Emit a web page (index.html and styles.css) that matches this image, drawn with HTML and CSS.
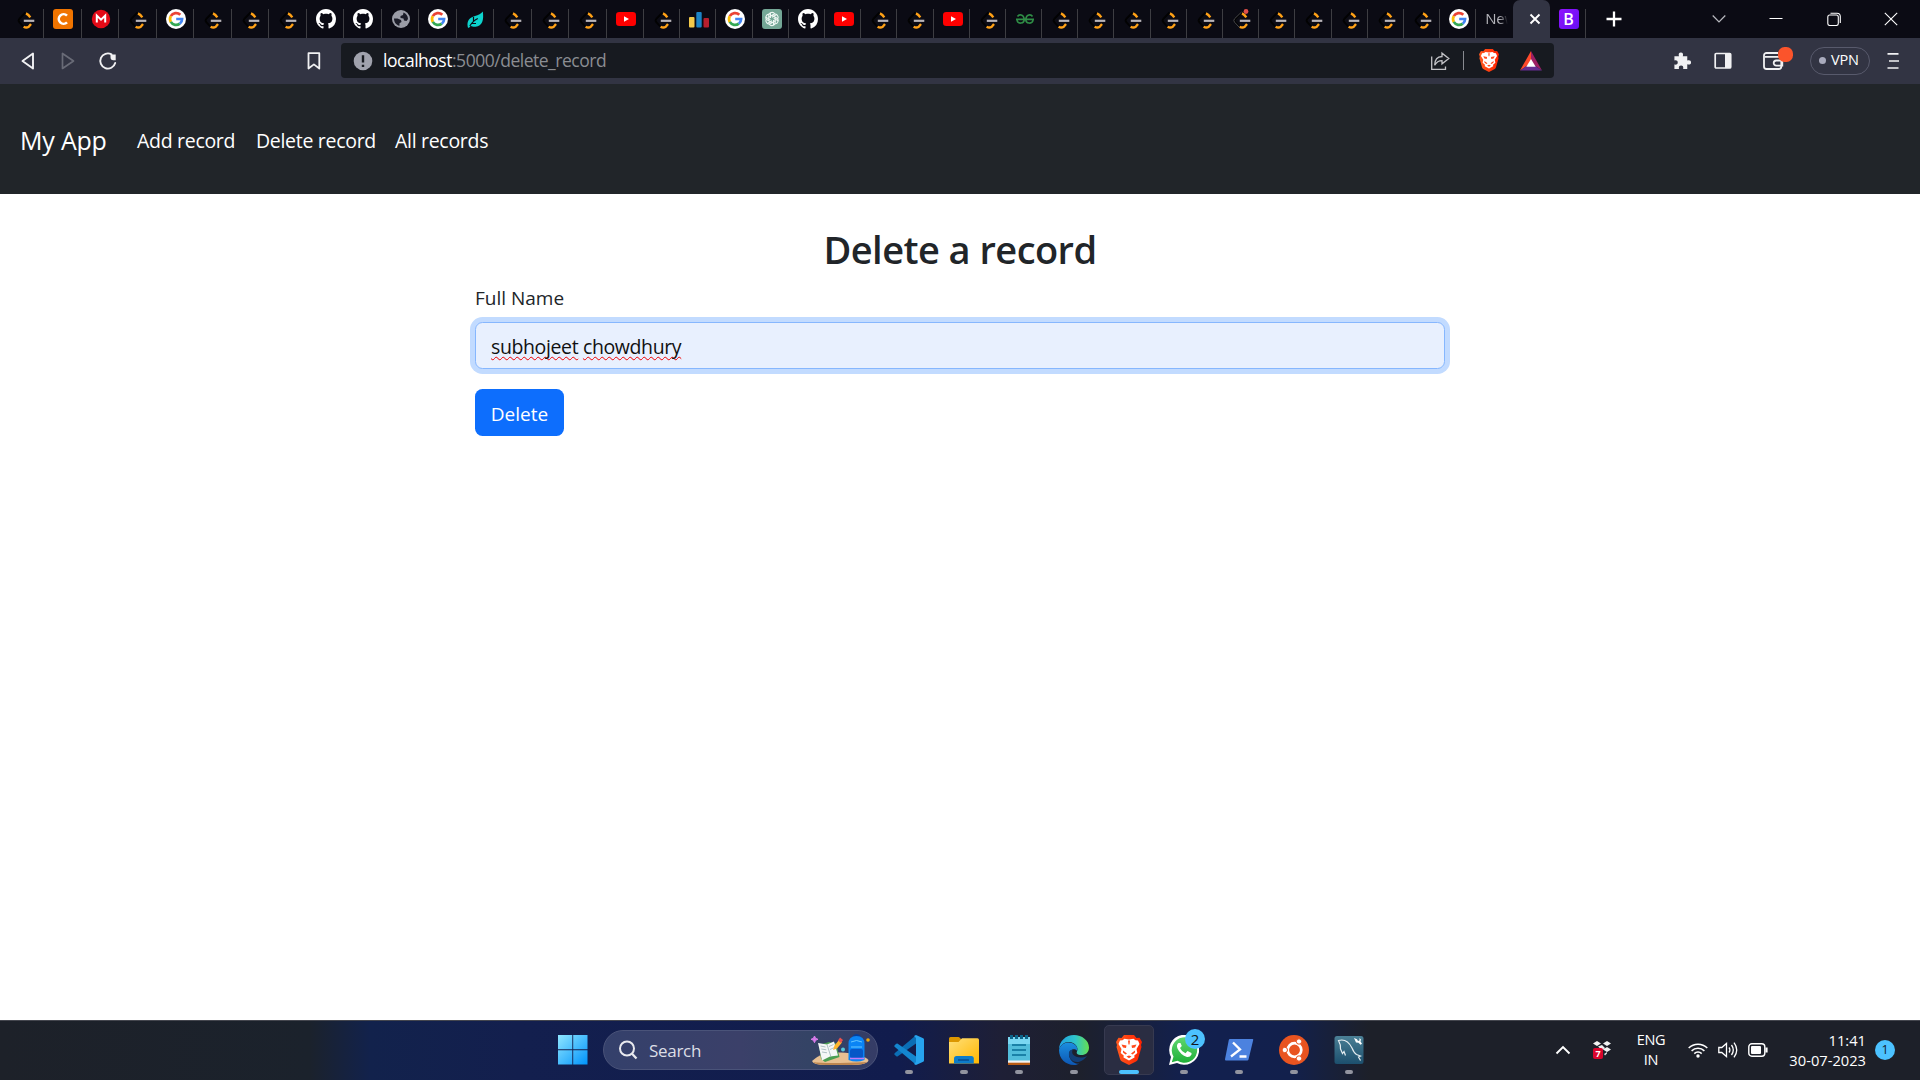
FILE: index.html
```html
<!DOCTYPE html>
<html lang="en">
<head>
<meta charset="utf-8">
<title>Delete a record</title>
<link rel="stylesheet" href="styles.css">
</head>
<body>
<svg class="sprite" aria-hidden="true">
  <defs>
    <linearGradient id="win-g" x1="0" y1="0" x2="1" y2="1"><stop offset="0" stop-color="#8fe6ff"/><stop offset="1" stop-color="#0093fb"/></linearGradient>
    <linearGradient id="edge-a" x1="0" y1="0" x2="1" y2="0"><stop offset="0" stop-color="#1fa0e4"/><stop offset=".55" stop-color="#2fc5c9"/><stop offset="1" stop-color="#66e04f"/></linearGradient>
    <linearGradient id="edge-b" x1="0" y1="0" x2="0" y2="1"><stop offset="0" stop-color="#1b8fe0"/><stop offset="1" stop-color="#0d57b4"/></linearGradient>
    <linearGradient id="brave-g" x1="0" y1="0" x2="1" y2="0"><stop offset="0" stop-color="#ff5a1f"/><stop offset="1" stop-color="#ff2200"/></linearGradient>
    <linearGradient id="fold-g" x1="0" y1="0" x2="1" y2="1"><stop offset="0" stop-color="#ffe07a"/><stop offset="1" stop-color="#ffb700"/></linearGradient>
    <linearGradient id="wa-g" x1="0" y1="0" x2="0" y2="1"><stop offset="0" stop-color="#5fd670"/><stop offset="1" stop-color="#20b038"/></linearGradient>
    <linearGradient id="sql-g" x1="0" y1="0" x2="0" y2="1"><stop offset="0" stop-color="#4b8096"/><stop offset="1" stop-color="#1c4f6d"/></linearGradient>
  </defs>
  <symbol id="leet" viewBox="0 0 20 20">
    <path d="M9.500 3.500 3.300 9.800q-1.400 1.700 0 3.400l4 4.300" fill="none" stroke="#020202" stroke-width="1.800"/>
    <path d="M10 4.400q2.600 1.200 4.300 4M7.600 17.700q2.800 1.600 5.200 0l2.200-2.700" fill="none" stroke="#ffa116" stroke-width="2.400"/>
    <path d="M7.800 11.800h10.500" stroke="#b9b5b9" stroke-width="2.200"/>
  </symbol>
  <symbol id="google" viewBox="0 0 20 20">
    <circle cx="10" cy="10" r="10" fill="#fff"/>
    <g fill="none" stroke-width="2.700">
      <path d="M4.800 7.200A6 6 0 0 1 14.300 5.800" stroke="#ea4335"/>
      <path d="M4.800 7.200a6 6 0 0 0 0 5.800" stroke="#fbbc05"/>
      <path d="M4.800 12.900a6 6 0 0 0 9 1.700" stroke="#34a853"/>
      <path d="M10.200 10h5.900a6 6 0 0 1-2.300 4.700" stroke="#4285f4"/>
    </g>
  </symbol>
  <symbol id="github" viewBox="0 0 16 16">
    <path fill="#fff" d="M8 0C3.580 0 0 3.580 0 8c0 3.540 2.290 6.530 5.470 7.590.4.070.55-.17.55-.38 0-.19-.01-.82-.01-1.490-2.010.37-2.530-.49-2.690-.94-.09-.23-.48-.94-.82-1.130-.28-.15-.68-.52-.01-.53.63-.01 1.080.58 1.230.82.72 1.210 1.870.87 2.330.66.07-.52.28-.87.51-1.070-1.780-.2-3.640-.89-3.640-3.950 0-.87.31-1.590.82-2.150-.08-.2-.36-1.020.08-2.120 0 0 .67-.21 2.200.82.64-.18 1.320-.27 2-.27s1.360.09 2 .27c1.530-1.040 2.200-.82 2.200-.82.44 1.100.16 1.920.08 2.120.51.56.82 1.270.82 2.150 0 3.070-1.870 3.750-3.650 3.950.29.25.54.73.54 1.480 0 1.070-.01 1.930-.01 2.200 0 .21.15.46.55.38A8.010 8.010 0 0 0 16 8c0-4.420-3.580-8-8-8z"/>
  </symbol>
  <symbol id="youtube" viewBox="0 0 20 20"><rect y="3" width="20" height="14" rx="3.300" fill="#f00"/><path d="M8 7.200v5.600l5-2.800z" fill="#fff"/></symbol>
  <symbol id="globe" viewBox="0 0 20 20"><circle cx="10" cy="10" r="9" fill="#9a9ca6"/><path d="M3 9.500h3.500L10 11l.5 2-2 1.200v2.600C5 16 3 13 3 9.500zM12.500 3.500C15 4.500 17 7 17 10l-1.500 2-2.500-.5-.5-2-3-.5V7l2.500-1z" fill="#1b1c28"/></symbol>
  <symbol id="leaf" viewBox="0 0 20 20"><path d="M16.800 2.500C18 11 16.500 17 9.500 17.800c-2 .2-3.600-.3-4.700-1L2.800 19l-1-.8C.5 12 3.500 8.500 9 7c3.500-1 6-2.300 7.800-4.500z" fill="#0dd3cd"/><path d="M3.800 17c2.500-4 4.500-6 8-7.500M7.500 8v4.500M6 14.500h4" fill="none" stroke="#0b0b14" stroke-width="1.200"/></symbol>
  <symbol id="bars" viewBox="0 0 20 20"><rect y="8" width="5.500" height="10.500" rx="1" fill="#f3c94a"/><rect x="7.300" y="3" width="5.400" height="15.500" rx="1" fill="#1c84c6"/><rect x="14.500" y="9" width="5.500" height="9.500" rx="1" fill="#b71f2d"/></symbol>
  <symbol id="gpt" viewBox="0 0 20 20"><rect width="20" height="20" rx="3" fill="#74a796"/><g fill="none" stroke="#eef6f3" stroke-width="1.100"><g id="petal"><path d="M6.800 12V6.500a3.200 3.200 0 0 1 6-1.400M10 8.200l4.600-2.600"/></g><use href="#petal" transform="rotate(60 10 10)"/><use href="#petal" transform="rotate(120 10 10)"/><use href="#petal" transform="rotate(180 10 10)"/><use href="#petal" transform="rotate(240 10 10)"/><use href="#petal" transform="rotate(300 10 10)"/></g></symbol>
  <symbol id="gfg" viewBox="0 0 20 20"><g fill="none" stroke="#2f8d46" stroke-width="1.600"><path d="M2.500 7.500c1.500-2.500 6-2.500 6.700 2.500.3 5-6.700 5.500-7.200 1M17.500 7.500c-1.500-2.500-6-2.500-6.700 2.500-.3 5 6.700 5.500 7.200 1M1 10.400h18"/></g></symbol>
  <symbol id="mega" viewBox="0 0 20 20"><circle cx="10" cy="10" r="9.200" fill="#e30a17"/><path d="M5.800 13.500v-7L10 10.600l4.200-4.100v7" fill="none" stroke="#fff" stroke-width="2"/></symbol>
  <symbol id="coursera" viewBox="0 0 20 20"><rect width="20" height="20" rx="3" fill="#f07400"/><path d="M14 6.600a4.800 4.800 0 1 0 0 6.800" fill="none" stroke="#fff" stroke-width="2.600"/></symbol>
  <symbol id="lion" viewBox="0 0 26 30">
    <path d="M8 0h10l2.500 3 3-.3L26 7l-1 3 .5 2-3.500 12q-.5 1.500-2 2.500L13 30l-7-3.500q-1.500-1-2-2.500L.5 12 1 10 0 7l2.500-4.300 3 .3z" fill="url(#brave-g)"/>
    <path d="M8.500 3.800 13 4.500l4.500-.7 2 1.500 2.500.2L23.500 9l-3 5 .8 4-3 2.500.2 2L13 25.500l-5.500-3 .2-2-3-2.500.8-4L2.500 9 4 5.500l2.500-.2z" fill="#fff"/>
    <path d="M5.500 9.500l5 1-.5 2.500-3-.5zM20.500 9.500l-5 1 .5 2.500 3-.5zM7 15.500l4 3-1.500 1L7 17.500zM19 15.500l-4 3 1.500 1L19 17.500zM10.500 21.500l2.500-1 2.500 1-2.500 1.700zM12 5.500h2l-.5 4h-1z" fill="#ff4a1c"/>
  </symbol>
</svg>

<header class="browser">
  <div class="tabstrip">
    <div class="tab first"><svg><use href="#leet"/></svg></div>
    <div class="tab"><svg><use href="#coursera"/></svg></div>
    <div class="tab"><svg><use href="#mega"/></svg></div>
    <div class="tab"><svg><use href="#leet"/></svg></div>
    <div class="tab"><svg><use href="#google"/></svg></div>
    <div class="tab"><svg><use href="#leet"/></svg></div>
    <div class="tab"><svg><use href="#leet"/></svg></div>
    <div class="tab"><svg><use href="#leet"/></svg></div>
    <div class="tab"><svg><use href="#github"/></svg></div>
    <div class="tab"><svg><use href="#github"/></svg></div>
    <div class="tab"><svg><use href="#globe"/></svg></div>
    <div class="tab"><svg><use href="#google"/></svg></div>
    <div class="tab"><svg><use href="#leaf"/></svg></div>
    <div class="tab"><svg><use href="#leet"/></svg></div>
    <div class="tab"><svg><use href="#leet"/></svg></div>
    <div class="tab"><svg><use href="#leet"/></svg></div>
    <div class="tab"><svg><use href="#youtube"/></svg></div>
    <div class="tab narrow"><svg><use href="#leet"/></svg></div>
    <div class="tab narrow"><svg><use href="#bars"/></svg></div>
    <div class="tab narrow"><svg><use href="#google"/></svg></div>
    <div class="tab narrow"><svg><use href="#gpt"/></svg></div>
    <div class="tab narrow"><svg><use href="#github"/></svg></div>
    <div class="tab narrow"><svg><use href="#youtube"/></svg></div>
    <div class="tab narrow"><svg><use href="#leet"/></svg></div>
    <div class="tab narrow"><svg><use href="#leet"/></svg></div>
    <div class="tab narrow"><svg><use href="#youtube"/></svg></div>
    <div class="tab narrow"><svg><use href="#leet"/></svg></div>
    <div class="tab narrow"><svg><use href="#gfg"/></svg></div>
    <div class="tab narrow"><svg><use href="#leet"/></svg></div>
    <div class="tab narrow"><svg><use href="#leet"/></svg></div>
    <div class="tab narrow"><svg><use href="#leet"/></svg></div>
    <div class="tab narrow"><svg><use href="#leet"/></svg></div>
    <div class="tab narrow"><svg><use href="#leet"/></svg></div>
    <div class="tab narrow"><svg viewBox="0 0 20 20"><use href="#leet"/><path d="M9.500 3 2.500 9.800q-1.400 1.700 0 3.400l5 5.300" fill="none" stroke="#4a4a4e"/><circle cx="14" cy="2.500" r="2.400" fill="#e0504c"/></svg></div>
    <div class="tab narrow"><svg><use href="#leet"/></svg></div>
    <div class="tab narrow"><svg><use href="#leet"/></svg></div>
    <div class="tab narrow"><svg><use href="#leet"/></svg></div>
    <div class="tab narrow"><svg><use href="#leet"/></svg></div>
    <div class="tab narrow"><svg><use href="#leet"/></svg></div>
    <div class="tab narrow"><svg><use href="#google"/></svg></div>
    <div class="tab narrow titled"><span class="tab-title">New</span></div>
    <div class="tab active"><svg viewBox="0 0 12 12"><path d="M1.500 1.500l9 9M10.500 1.500l-9 9" stroke="#fff" stroke-width="1.900"/></svg></div>
    <div class="tab boot"><span class="boot-icon">B</span></div>
    <svg class="new-tab" viewBox="0 0 16 16"><path d="M8 .5v15M.5 8h15" stroke="#fff" stroke-width="2.300"/></svg>
    <div class="window-controls">
      <svg viewBox="0 0 14 14"><path d="M.7 3.500 7 10l6.300-6.500" fill="none" stroke="#b9bac0" stroke-width="1.200"/></svg>
      <svg viewBox="0 0 14 14"><path d="M.5 6.500h13" stroke="#fff" stroke-width="1"/></svg>
      <svg viewBox="0 0 14 14"><g fill="none" stroke="#fff" stroke-width="1.100"><rect x=".8" y="3" width="10.500" height="10.500" rx="2"/><path d="M3.500 1.200h6.500q3.300 0 3.300 3.300v6.500"/></g></svg>
      <svg viewBox="0 0 14 14"><path d="M.8.8l12.400 12.400M13.200.8.8 13.200" stroke="#fff" stroke-width="1.100"/></svg>
    </div>
  </div>

  <div class="toolbar">
    <div class="nav-buttons">
      <svg viewBox="0 0 20 20"><path d="M15 2.500v15L4.500 10z" fill="none" stroke="#f1f1f3" stroke-width="1.900" stroke-linejoin="round"/></svg>
      <svg viewBox="0 0 20 20"><path d="M4.500 2.500v15L15.500 10z" fill="none" stroke="#696b77" stroke-width="1.700" stroke-linejoin="round"/></svg>
      <svg viewBox="0 0 20 20"><path d="M13.500 3.300A7.600 7.600 0 1 0 17.200 12" fill="none" stroke="#f1f1f3" stroke-width="1.900" stroke-linecap="round"/><path d="M12.500 3.500h5.200v5.700h-2.400a3 3 0 0 1-2.800-3z" fill="#f1f1f3"/></svg>
    </div>
    <svg class="bookmark" viewBox="0 0 20 20"><path d="M4.500 2.200h10.800V17.500L9.900 13.400 4.500 17.500z" fill="none" stroke="#f1f1f3" stroke-width="1.800" stroke-linejoin="round"/></svg>
    <div class="address">
      <svg class="info" viewBox="0 0 20 20"><circle cx="10" cy="10" r="9.300" fill="#a0a2ad"/><path d="M10 4.300v7.200M10 13.800v2.200" stroke="#171a20" stroke-width="2.400"/></svg>
      <span class="url"><b>localhost</b>:5000/delete_record</span>
      <svg class="share" viewBox="0 0 20 20"><g fill="none" stroke="#c2c2c6" stroke-width="1.300"><path d="M1.700 5.500v12.800h13.800V15.500"/><path d="M4.700 14.200C4.800 8.500 7.500 5.600 12 5.500V2.200l6.800 5.300-6.800 5.300V9.600C9 9.600 6.600 10.800 4.700 14.200z"/></g></svg>
      <i class="divider"></i>
      <svg class="shield"><use href="#lion"/></svg>
      <svg class="bat" viewBox="0 0 22 20"><path d="M11 0 0 19.500 11 12z" fill="#ff4a2b"/><path d="M11 0 22 19.500 11 12z" fill="#9e1f63"/><path d="M0 19.500h22L11 12z" fill="#662d91"/><path d="M11 8 6.300 15.700h9.400z" fill="#fff"/></svg>
    </div>
    <div class="actions">
      <svg class="puzzle" viewBox="0 0 20 20"><path d="M1.500 5h4.800C5.500 2.500 6.300 1 8.300 1s2.800 1.500 2 4H15v4.500c2.500-.8 4 0 4 2s-1.500 2.800-4 2V18.500h-4.300c.6-2.500-.5-3.700-2.200-3.700S5.700 16 6.300 18.500H1.500v-4.700c2.300.5 3.500-.5 3.500-2.200S3.800 8.900 1.500 9.400z" fill="#f1f1f3"/></svg>
      <svg class="panel" viewBox="0 0 18 18"><rect x="1.200" y="1.500" width="15.500" height="14.500" rx="1" fill="none" stroke="#f1f1f3" stroke-width="1.700"/><path d="M11 1.500h5.500v14.500H11z" fill="#f1f1f3"/></svg>
      <svg class="wallet" viewBox="0 0 32 26"><g fill="none" stroke="#f1f1f3" stroke-width="1.800"><path d="M16 7H4.500A2.500 2.500 0 0 0 2 9.500v11A2.500 2.500 0 0 0 4.500 23h12.300a2.500 2.500 0 0 0 2.500-2.500V12M3 10.800h14"/><path d="M20.300 14.500h-6a2.600 2.600 0 0 0 0 5.200h6z"/></g><rect x="16" y="1" width="15" height="15" rx="6.500" fill="#fb542b"/></svg>
      <span class="vpn"><i></i>VPN</span>
      <svg class="menu" viewBox="0 0 12 18"><path d="M.5 1.800h11M2 9h10M.5 16h11" stroke="#f1f1f3" stroke-width="1.700"/></svg>
    </div>
  </div>
</header>

<nav class="navbar">
  <a class="brand">My App</a>
  <a class="link add">Add record</a>
  <a class="link del">Delete record</a>
  <a class="link all">All records</a>
</nav>

<main class="page">
  <form class="record-form">
    <h1>Delete a record</h1>
    <label>Full Name</label>
    <div class="input"><span class="misspelt">subhojeet</span> <span class="misspelt">chowdhury</span></div>
    <button type="button">Delete</button>
  </form>
</main>

<footer class="taskbar">
  <svg class="start" viewBox="0 0 30 30"><path d="M0 0h14.300v14.300H0zM15.200 0H29.500v14.300H15.200zM0 15.200h14.300V29.500H0zM15.200 15.200h14.300v14.300H15.200z" fill="url(#win-g)"/></svg>
  <div class="search">
    <svg class="glass" viewBox="0 0 20 20"><circle cx="9" cy="8.500" r="7" fill="none" stroke="#e8e9ee" stroke-width="2"/><path d="M13.800 13.500 18.500 18.500" stroke="#e8e9ee" stroke-width="2.300"/></svg>
    <span>Search</span>
    <svg class="doodle" viewBox="0 0 60 32">
      <path d="M1 27C8 20 18 18 30 18.500S54 22 57.500 26Q57 31 40 31H15Q2 31 1 27z" fill="#e8c092"/><path d="M2 28q12 2 54 0-3 3-16 3H15Q5 31 2 28z" fill="#bd8650"/>
      <path d="M3.500 2 4.600 4.300l2.400 1-2.400 1L3.500 8.700 2.400 6.300 0 5.300l2.400-1z" fill="#d77be9" stroke="#d77be9"/>
      <path d="M8 11l10-3 7 1.500 3.500 13.500L14 28l-4-3z" fill="#4b9f52"/><path d="M7 9l9 1.500 7-3 4 14-8 1-8 4z" fill="#f5f7f7"/><path d="M16 10.500 20 23M9.500 12l5 1M10.300 15l5 .8M11 18l5 .8M18 12.500l4.500-2M19 15.500l4.500-2" stroke="#9db4b7" stroke-width=".8"/>
      <path d="M22 16l1.500-4.500L28 6l3 2.500-5 6z" fill="#ffb52e"/><path d="M27 6.500 29 3.500l3 2.500-2 3z" fill="#e8514e"/>
      <circle cx="32" cy="15.500" r="2" fill="#55c8dd"/><circle cx="57" cy="6" r="1.800" fill="#f2a90b"/>
      <path d="M42 3q3.500-4 7 0" fill="none" stroke="#063f9b" stroke-width="2"/><path d="M37.500 26V10q0-8 8-8t8 8v16q-8 3-16 0z" fill="#0a84f5"/><path d="M40 8q5.500-3 11 0M40 13h11" stroke="#67c7ff" fill="none"/><rect x="39" y="15" width="13" height="9" rx="2" fill="#0757c7"/><path d="M39 24.500h14" stroke="#c67bf6" stroke-width="1.500"/>
    </svg>
  </div>
  <div class="apps">
    <div class="app"><svg viewBox="0 0 30 30"><path d="M22 .3 22 8.500 3.800 21.300Q3 21.700 2.300 21.200L.6 19.700Q0 19 .6 18.300z" fill="#0b6eb5"/><path d="M22 29.700 22 21.500 3.800 8.700Q3 8.300 2.300 8.800L.6 10.300Q0 11 .6 11.700z" fill="#1486cf"/><path d="M22 0l7.200 3.300q.8.400.8 1.300v20.800q0 .9-.8 1.300L22 30l-2-1 2-2V3L20 1z" fill="#27a4ee"/></svg></div>
    <div class="app"><svg viewBox="0 0 30 30"><path d="M0 3.500Q0 2 1.500 2h8q1 0 2 1.500L13 5H26q2 0 2 2H0z" fill="#dc9700"/><path d="M0 7h9.500L13 3.300H28.500Q30 3.300 30 5V28.500H0z" fill="url(#fold-g)"/><path d="M5 28.500v-5Q5 21 7.500 21h14.800q2.500 0 2.500 2.500v5z" fill="#0d7cc9"/><path d="M9 25h11" stroke="#07549a" stroke-width="1.800"/></svg></div>
    <div class="app"><svg viewBox="0 0 30 30"><path d="M4 2H26V27H4z" fill="#52bddb"/><path d="M4 2h22v7H4z" fill="#7ad7f2"/><path d="M4 26.500h22V30H4z" fill="#b95b13"/><path d="M4 25.500h22v2.200H4z" fill="#f2f2f2"/><path d="M8 10h14M8 15h14M8 20h14" stroke="#096d96" stroke-width="1.700"/><path d="M7.500 0v4M12.500 0v4M17.500 0v4M22.500 0v4" stroke="#0c658a" stroke-width="3"/></svg></div>
    <div class="app"><svg viewBox="0 0 30 30"><path d="M0 15C0 6 7 0 15 0s15 5.500 15 12.500c0 5-3.500 7.500-7.500 7.500-4 0-5.500-1.500-4.500-3.500C20 12.500 16 7 10 7 5 7 1 10.500 0 15z" fill="url(#edge-a)"/><path d="M0 15c1-4.500 5-7.500 9.500-7.500 6 0 10 4.500 8.600 8.500-1.100-3-8.100-2.500-8.100 3.500 0 5 5 10 10 9C18 30 17 30 15 30 6.500 30 0 23.500 0 15z" fill="url(#edge-b)"/><path d="M10.500 16c-2.500 6 3 12 9 11 4-1 7-3.500 8.500-6-5 2.500-11 2-14-1.500-1-1.200-1-3-.5-4.500-1.500 0-2.500.5-3 1z" fill="#123f78"/></svg></div>
    <div class="app current"><svg class="brave"><use href="#lion"/></svg></div>
    <div class="app"><svg viewBox="0 0 30 30"><path d="M0 30 2 22A15 15 0 1 1 8 28z" fill="#fff"/><path d="M2.800 27.300 4.500 21.500A12.700 12.700 0 1 1 8.500 25.700z" fill="url(#wa-g)"/><path d="M9.500 8q-2.500 2-1 5.500 3 6.500 9.500 8.500 3 .5 4.500-2.500v-1.500L18.500 16l-2 2.200q-4-1.500-5.500-5.200L12.800 11 11.500 8z" fill="#fff"/></svg><span class="count">2</span></div>
    <div class="app"><svg viewBox="0 0 30 30"><path d="M6 4H28.500Q29.500 4 29.200 5L24.500 24.500Q24.200 25.500 23.200 25.500H2Q.8 25.500 1 24.300L4.800 5Q5 4 6 4z" fill="#4c82df"/><path d="M9 7.500 16 14.500 7 21.500M15.500 21.500h7" fill="none" stroke="#fff" stroke-width="2.300"/></svg></div>
    <div class="app"><svg viewBox="0 0 30 30"><circle cx="15" cy="15" r="15" fill="#e95420"/><circle cx="15.500" cy="15" r="6.800" fill="none" stroke="#fff" stroke-width="2.700"/><g fill="#fff" stroke="#e95420"><circle cx="5.800" cy="15" r="2.700"/><circle cx="20" cy="6.500" r="2.700"/><circle cx="20" cy="23.500" r="2.700"/></g></svg></div>
    <div class="app"><svg viewBox="0 0 30 30"><rect x=".5" y="1" width="29" height="28" rx="2.500" fill="url(#sql-g)"/><path d="M11.500 20.500 10 16.500 8.500 18.500 6.500 14Q7 10 4.500 5.500 13 3 18 13q2 5 4.500 6.500l4 1.500-2 1 2 3.500" fill="none" stroke="#e5edf1" stroke-width="1.200"/><path d="M20 3l3 1.200 1 1.800 1.500-.5V3L27 4.500l-.5 2 1.500 2.300-1.500 1-2-2L22 7.500z" fill="#fff"/></svg></div>
  </div>
  <div class="tray">
    <svg class="chev" viewBox="0 0 16 10"><path d="M1.500 8.500 8 2l6.500 6.500" fill="none" stroke="#fff" stroke-width="1.900"/></svg>
    <div class="dropbox"><svg viewBox="0 0 20 20"><path d="M1 3.500 5 1l4 2.500L5 6zM11 3.500 15 1l4 2.500L15 6zM11 9.500 15 7l4 2.500-4 2.500zM6 6.500l4-1.500 3 3-3 2z" fill="#f2f2f2"/><path d="M12 14l3-2v1.500l-2 2z" fill="#ddd"/></svg><span>7</span></div>
    <div class="lang"><span>ENG</span><span>IN</span></div>
    <svg class="wifi" viewBox="0 0 20 16"><g fill="none" stroke="#fff" stroke-width="1.500"><path d="M.7 6a13.200 13.200 0 0 1 18.600 0M3.600 8.900a9 9 0 0 1 12.800 0M6.300 11.600a5.200 5.200 0 0 1 7.400 0"/></g><circle cx="10" cy="14" r="1.700" fill="#fff"/></svg>
    <svg class="sound" viewBox="0 0 20 18"><g fill="none" stroke="#fff" stroke-width="1.300"><path d="M.8 6.500v5h3l4.700 4V2.500l-4.700 4z"/><path d="M11 6.500q1.800 2.500 0 5M13.500 4q3.600 5 0 10M16 1.700q5.500 7.300 0 14.600"/></g></svg>
    <svg class="battery" viewBox="0 0 20 14"><rect x=".8" y=".8" width="16" height="12.400" rx="3" fill="none" stroke="#fff" stroke-width="1.400"/><rect x="3" y="3" width="10" height="8" rx="1" fill="#fff"/><path d="M18.500 4.500v5" stroke="#fff" stroke-width="2.200"/></svg>
    <div class="clock"><span class="time">11:41</span><span class="date">30-07-2023</span></div>
    <span class="notices">1</span>
  </div>
</footer>
</body>
</html>
```
FILE: styles.css
```css
* { box-sizing: border-box; }

body {
  margin: 0;
  width: 1920px;
  height: 1080px;
  display: flex;
  flex-direction: column;
  overflow: hidden;
  background: #fff;
  font-family: "Open Sans", "Noto Sans", sans-serif;
}

svg { display: block; flex: none; }
.sprite { position: absolute; width: 0; height: 0; }

/* Browser tabs */
.tabstrip { height: 38px; display: flex; background: #0b0b14; }
.tab {
  flex: none;
  width: 37.5px;
  height: 29px;
  margin-top: 9px;
  padding-left: 9px;
  border-right: 1px solid #3d3d42;
}
.tab > svg { width: 20px; height: 20px; }
.tab.first { width: 44px; padding-left: 16px; }
.tab.narrow { width: 36.2px; }
.tab.titled { border: 0; padding: 0 0 0 9px; }
.tab-title {
  display: block;
  width: 24px;
  overflow: hidden;
  font-size: 15px;
  line-height: 19px;
  letter-spacing: -.3px;
  color: #b4b4ba;
  -webkit-mask-image: linear-gradient(90deg, #000 60%, transparent 95%);
  mask-image: linear-gradient(90deg, #000 60%, transparent 95%);
}
.tab.active {
  width: 37px;
  height: 38px;
  margin: 0;
  padding: 13px 0 0 16px;
  border: 0;
  border-radius: 7px 7px 0 0;
  background: #323443;
}
.tab.active > svg { width: 12px; height: 12px; }
.tab.boot { width: 36px; }
.boot-icon {
  display: block;
  width: 20px;
  height: 20px;
  border-radius: 3px;
  background: linear-gradient(135deg, #9013fe, #6610f2);
  color: #fff;
  font: 600 16px/20px "Open Sans", sans-serif;
  text-align: center;
}
.new-tab { width: 16px; height: 16px; margin: 11px 0 0 20px; }
.window-controls { display: flex; gap: 43.500px; margin: 12px 22px 0 auto; }
.window-controls svg { width: 14px; height: 14px; }

/* Address row */
.toolbar { height: 46px; padding-bottom: 1px; display: flex; align-items: center; background: #323443; }
.nav-buttons { display: flex; gap: 20px; padding-left: 18px; }
.nav-buttons svg { width: 20px; height: 20px; }
.bookmark { width: 20px; height: 20px; margin-left: 186px; }
.address {
  flex: none;
  width: 1213px;
  height: 35px;
  margin-left: 17px;
  padding: 0 12px 0 12px;
  display: flex;
  align-items: center;
  border-radius: 4px;
  background: #171a20;
}
.info { width: 20px; height: 20px; margin-right: 10px; }
.url { font-size: 17.500px; letter-spacing: -.48px; padding-bottom: 1px; color: #8b8d92; white-space: nowrap; }
.url b { font-weight: 400; color: #fff; }
.share { width: 20px; height: 20px; margin-left: auto; }
.divider { width: 1px; height: 19px; margin: 0 15px 0 13px; background: #888a90; }
.shield { width: 20px; height: 23px; margin-right: 21px; }
.bat { width: 22px; height: 20px; }
.actions { flex: 1; display: flex; align-items: center; padding-left: 119px; }
.puzzle { width: 19px; height: 20px; }
.panel { width: 18px; height: 18px; margin-left: 22px; }
.wallet { width: 32px; height: 26px; margin: -4px 0 0 30px; }
.vpn {
  flex: none;
  width: 60px;
  height: 28px;
  margin-left: 16px;
  padding: 0 0 2px 8px;
  display: flex;
  align-items: center;
  border: 1px solid #585a6c;
  border-radius: 14px;
  color: #fff;
  font-size: 14.500px;
  letter-spacing: -.2px;
}
.vpn i { width: 7px; height: 7px; margin: 2px 5px 0 0; border-radius: 50%; background: #a9abbd; }
.menu { width: 12px; height: 18px; margin-left: 17px; }

/* Site navigation */
.navbar {
  height: 110px;
  display: flex;
  align-items: center;
  padding: 1px 0 0 20px;
  background: #212529;
  color: #fff;
  white-space: nowrap;
}
.brand { width: 117px; font-size: 25px; letter-spacing: -.2px; }
.link { padding-top: 1px; font-size: 19.500px; letter-spacing: -.3px; }
.add { width: 119px; }
.del { width: 139px; }

/* Form */
.page { flex: 1; }
.record-form {
  width: 970px;
  margin: 0 auto;
  padding-top: 31px;
  display: flex;
  flex-direction: column;
  color: #212529;
}
.record-form h1 {
  margin: 0;
  text-align: center;
  font-size: 38px;
  line-height: 48px;
  font-weight: 600;
  letter-spacing: -.55px;
}
.record-form label { margin: 10px 0 9px; font-size: 19px; line-height: 30px; }
.input {
  height: 47px;
  padding: 2px 15px 0;
  border: 1px solid #86b7fe;
  border-radius: 7.500px;
  background: #e8f0fe;
  box-shadow: 0 0 0 5px #c2dbff;
  color: #111;
  font-size: 19.500px;
  letter-spacing: -.38px;
  line-height: 44px;
}
.misspelt { text-decoration: underline wavy #e00 1px; text-decoration-skip-ink: none; text-underline-offset: 2px; }
.record-form button {
  align-self: flex-start;
  width: 89px;
  height: 47px;
  margin-top: 20px;
  padding: 2px 0 0;
  border: 0;
  border-radius: 7.500px;
  background: #0d6efd;
  color: #fff;
  font: 19px "Open Sans", sans-serif;
}

/* Desktop taskbar */
.taskbar {
  height: 60px;
  padding-bottom: 1px;
  display: flex;
  align-items: center;
  border-top: 1px solid #44464e;
  background: linear-gradient(90deg, #1d2129 0, #1b222c 310px, #12224c 370px, #131f4e 520px, #111c4d 900px, #1e1f36 1000px, #1d202c 1080px, #12204f 1190px, #12204c 1290px, #1d2029 1370px, #1d2029 100%);
  color: #fff;
}
.start { width: 30px; height: 30px; margin-left: 558px; }
.search {
  flex: none;
  width: 275px;
  height: 40px;
  margin-left: 15px;
  padding: 0 6px 0 14px;
  display: flex;
  align-items: center;
  border: 1px solid #4a5379;
  border-radius: 20px;
  background: linear-gradient(90deg, #34406b, #3b4069 50%, #344365 75%, #353c66);
  color: #dcdee6;
  font-size: 17px;
  letter-spacing: -.3px;
}
.glass { width: 20px; height: 20px; margin-right: 11px; }
.doodle { width: 60px; height: 32px; margin-left: auto; }
.apps { display: flex; margin-left: 6px; }
.app {
  width: 50px;
  height: 50px;
  margin-right: 5px;
  padding-top: 10px;
  position: relative;
  display: flex;
  flex-direction: column;
  align-items: center;
  justify-content: space-between;
}
.app svg { width: 30px; height: 30px; }
.app .brave { width: 26px; height: 30px; }
.app::after { content: ""; width: 8px; height: 4px; margin-bottom: 1px; border-radius: 2px; background: #92949f; }
.app.current { border: 1px solid #373a50; border-radius: 5px; background: #2a2d42; padding-top: 9px; }
.app.current::after { width: 20px; margin-bottom: 0; background: #4cc2ff; }
.count {
  position: absolute;
  left: 26px;
  top: 4px;
  width: 20px;
  height: 20px;
  border-radius: 50%;
  background: #4cc2ff;
  color: #101820;
  font-size: 15px;
  line-height: 20px;
  text-align: center;
}
.tray { margin-left: auto; padding-right: 25px; display: flex; align-items: center; }
.chev { width: 16px; height: 10px; }
.dropbox { position: relative; width: 20px; height: 20px; margin-left: 21px; }
.dropbox span {
  position: absolute;
  left: 1px;
  top: 8px;
  width: 10px;
  height: 11px;
  border-radius: 2px;
  background: #d9042b;
  font: 700 9px/11px "Open Sans", sans-serif;
  text-align: center;
}
.lang { width: 32px; margin-left: 23px; display: flex; flex-direction: column; align-items: center; font-size: 14.500px; line-height: 20px; letter-spacing: -.3px; }
.wifi { width: 20px; height: 16px; margin-left: 21px; }
.sound { width: 20px; height: 18px; margin-left: 10px; }
.battery { width: 20px; height: 14px; margin-left: 10px; }
.clock { width: 87px; margin-left: 11px; margin-right: -1px; display: flex; flex-direction: column; align-items: flex-end; font-size: 14.700px; line-height: 20px; white-space: nowrap; }
.notices {
  width: 20px;
  height: 20px;
  margin-left: 10px;
  border-radius: 50%;
  background: #4cc2ff;
  color: #14202c;
  font-size: 12.500px;
  line-height: 20px;
  text-align: center;
}
```
